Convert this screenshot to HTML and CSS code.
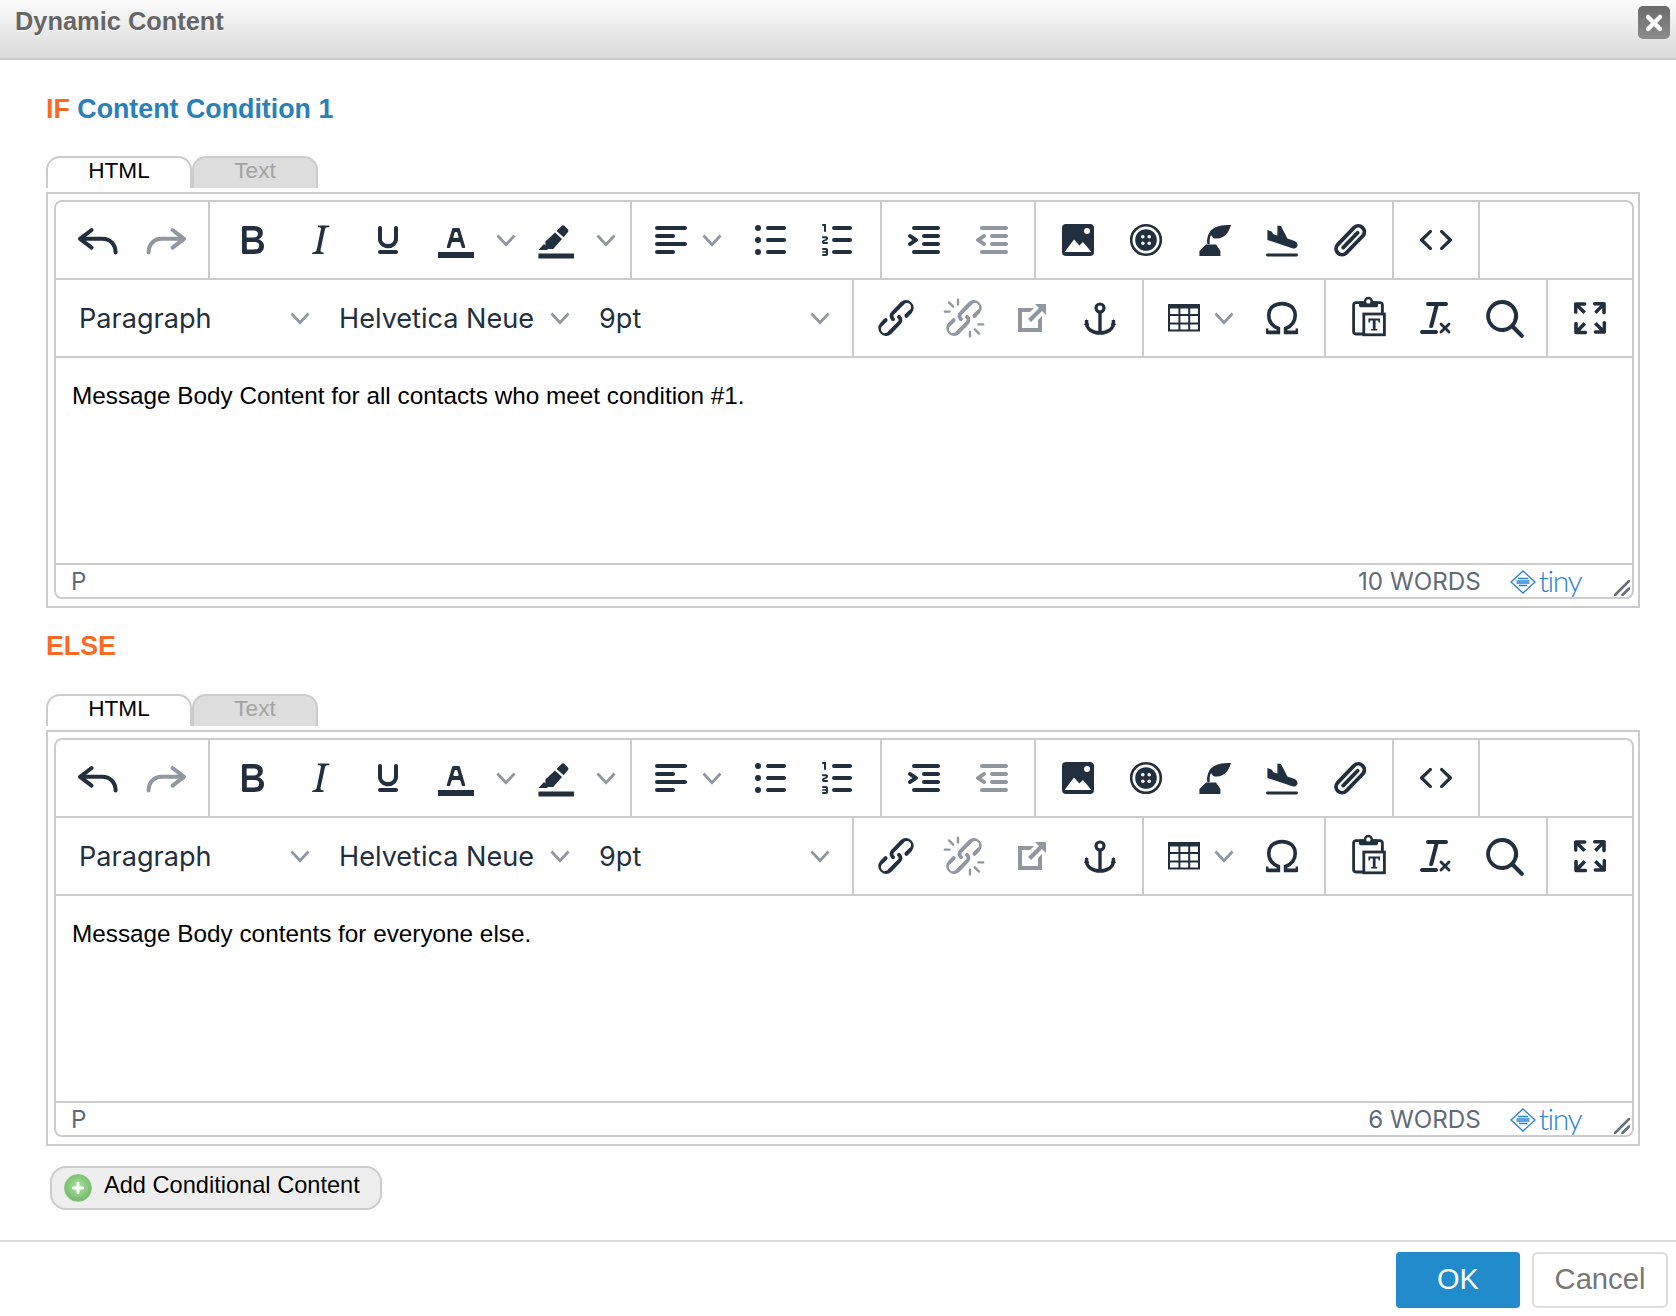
FILE: index.html
```html
<!DOCTYPE html>
<html lang="en">
<head>
<meta charset="utf-8">
<title>Dynamic Content</title>
<link rel="stylesheet" href="styles.css">
</head>
<body>
<svg class="defs" xmlns="http://www.w3.org/2000/svg">
  <symbol id="undo" viewBox="0 0 24 24"><path d="M8.800 7 3 11.400l5.800 4.400M3 11.400h11c4 0 6.800 2.600 6.800 6.900" fill="none" stroke="currentColor" stroke-width="2" stroke-linecap="round" stroke-linejoin="round"/></symbol>
  <symbol id="redo" viewBox="0 0 24 24"><path d="M15.300 7l5.700 4.400-5.700 4.400M21 11.400H10c-4 0-6.700 2.600-6.700 6.900" fill="none" stroke="currentColor" stroke-width="2" stroke-linecap="round" stroke-linejoin="round"/></symbol>
  <symbol id="bold" viewBox="0 0 24 24"><path d="M7.800 19c-.3 0-.5 0-.6-.2l-.2-.5V5.700c0-.2 0-.4.2-.5l.6-.2h5c1.500 0 2.700.3 3.500 1 .7.6 1.100 1.400 1.100 2.500a3 3 0 0 1-.6 1.900c-.4.6-1 1-1.600 1.200.4.1.9.3 1.300.6s.8.7 1 1.200c.4.4.5 1 .5 1.600 0 1.300-.4 2.300-1.300 3-.8.7-2.100 1-3.800 1H7.800zm5-8.300c.6 0 1.200-.1 1.600-.5.4-.3.6-.7.6-1.300 0-1.100-.8-1.700-2.300-1.700H9.300v3.500h3.500zm.5 6c.7 0 1.300-.1 1.700-.4.4-.4.600-.9.600-1.500s-.2-1-.7-1.400c-.4-.3-1-.4-2-.4H9.400v3.700h3.900z" fill="currentColor"/></symbol>
  <symbol id="italic" viewBox="0 0 24 24"><path d="M16.700 4.700l-.1.900h-.3c-.6 0-1 0-1.400.3-.3.3-.4.6-.5 1.100l-2.100 9.800v.6c0 .5.4.8 1.400.8h.2l-.2.8H8l.2-.8h.2c1.100 0 1.800-.5 2-1.500l2-9.800.1-.5c0-.6-.4-.8-1.400-.8h-.3l.2-.9h5.400z" fill="currentColor"/></symbol>
  <symbol id="underline" viewBox="0 0 24 24"><path d="M16 5c.6 0 1 .4 1 1v5.500a4 4 0 0 1-.4 1.800l-1 1.400a5.300 5.300 0 0 1-5.500 1 5 5 0 0 1-1.600-1c-.5-.4-.8-.9-1.100-1.400a4 4 0 0 1-.4-1.800V6c0-.6.4-1 1-1s1 .4 1 1v5.500c0 .3 0 .6.2 1l.6.7a3.300 3.300 0 0 0 2.200.8 3.400 3.400 0 0 0 2.200-.8c.3-.2.4-.5.6-.8l.2-.9V6c0-.6.400-1 1-1zM8 17h8c.6 0 1 .4 1 1s-.4 1-1 1H8a1 1 0 0 1 0-2z" fill="currentColor"/></symbol>
  <symbol id="textcolor" viewBox="0 0 24 24"><path d="M3 18h18v3H3z" fill="currentColor"/><path d="M8.700 16h-.8a.5.5 0 0 1-.5-.6l2.700-9c.1-.3.3-.4.5-.4h2.800c.2 0 .4.100.5.400l2.700 9a.5.5 0 0 1-.5.600h-.8a.5.5 0 0 1-.4-.4l-.7-2.200c0-.3-.3-.4-.5-.4h-3.400c-.2 0-.4.100-.5.400l-.7 2.200c0 .3-.2.400-.4.400zm2.600-7.600l-.6 2a.5.5 0 0 0 .5.600h1.600a.5.5 0 0 0 .5-.6l-.6-2c0-.3-.3-.4-.5-.4h-.4c-.2 0-.4.100-.5.400z" fill="currentColor"/></symbol>
  <symbol id="highlight" viewBox="0 0 24 24"><path d="M3.200 18.700H21v2.600H3.200z" fill="currentColor"/><path d="M15 4.800q.6-.5 1.200.1L18 6.700q.5.700 0 1.300l-2.200 2.600-3.500-3.100zM11.500 8.300 15 11.500l-4.400 5H8.200L6.700 15v-2.300zM6 14l2 2.300-.3.700H3.200z" fill="currentColor"/></symbol>
  <symbol id="alignleft" viewBox="0 0 24 24"><path d="M5 5h14c.6 0 1 .4 1 1s-.4 1-1 1H5a1 1 0 1 1 0-2zm0 4h8c.6 0 1 .4 1 1s-.4 1-1 1H5a1 1 0 1 1 0-2zm0 8h8c.6 0 1 .4 1 1s-.4 1-1 1H5a1 1 0 0 1 0-2zm0-4h14c.6 0 1 .4 1 1s-.4 1-1 1H5a1 1 0 0 1 0-2z" fill="currentColor"/></symbol>
  <symbol id="ul" viewBox="0 0 24 24"><path d="M11 5h8c.6 0 1 .4 1 1s-.4 1-1 1h-8a1 1 0 0 1 0-2zm0 6h8c.6 0 1 .4 1 1s-.4 1-1 1h-8a1 1 0 0 1 0-2zm0 6h8c.6 0 1 .4 1 1s-.4 1-1 1h-8a1 1 0 0 1 0-2z" fill="currentColor"/><circle cx="6" cy="6" r="1.500" fill="currentColor"/><circle cx="6" cy="12" r="1.500" fill="currentColor"/><circle cx="6" cy="18" r="1.500" fill="currentColor"/></symbol>
  <symbol id="ol" viewBox="0 0 24 24"><path d="M10 17h8c.6 0 1 .4 1 1s-.4 1-1 1h-8a1 1 0 0 1 0-2zm0-6h8c.6 0 1 .4 1 1s-.4 1-1 1h-8a1 1 0 0 1 0-2zm0-6h8c.6 0 1 .4 1 1s-.4 1-1 1h-8a1 1 0 1 1 0-2zM6 4v3.500c0 .3-.2.5-.5.5a.5.5 0 0 1-.5-.5V5h-.5a.5.5 0 0 1 0-1H6zm-1 8.800l.2.200h1.300c.3 0 .5.200.5.500s-.2.500-.5.500H4.900a1 1 0 0 1-.9-1V13c0-.4.300-.8.600-1l1.200-.4.200-.3a.2.2 0 0 0-.2-.2H4.500a.5.5 0 0 1-.5-.5c0-.3.200-.5.500-.5h1.600c.5 0 .9.400.9 1v.1c0 .4-.3.8-.6 1l-1.200.4-.2.300zM7 17v2c0 .6-.4 1-1 1H4.500a.5.5 0 0 1 0-1h1.200c.2 0 .3-.1.3-.3 0-.2-.1-.3-.3-.3H4.400a.4.4 0 1 1 0-.8h1.300c.2 0 .3-.1.3-.3 0-.2-.1-.3-.3-.3H4.500a.5.5 0 1 1 0-1H6c.6 0 1 .4 1 1z" fill="currentColor"/></symbol>
  <symbol id="indent" viewBox="0 0 24 24"><path d="M7 5h12c.6 0 1 .4 1 1s-.4 1-1 1H7a1 1 0 1 1 0-2zm5 4h7c.6 0 1 .4 1 1s-.4 1-1 1h-7a1 1 0 0 1 0-2zm0 4h7c.6 0 1 .4 1 1s-.4 1-1 1h-7a1 1 0 0 1 0-2zm-5 4h12a1 1 0 0 1 0 2H7a1 1 0 0 1 0-2zm-2.600-3.800L6.200 12l-1.800-1.200a1 1 0 0 1 1.200-1.600l3 2a1 1 0 0 1 0 1.600l-3 2a1 1 0 1 1-1.200-1.600z" fill="currentColor"/></symbol>
  <symbol id="outdent" viewBox="0 0 24 24"><path d="M7 5h12c.6 0 1 .4 1 1s-.4 1-1 1H7a1 1 0 1 1 0-2zm5 4h7c.6 0 1 .4 1 1s-.4 1-1 1h-7a1 1 0 0 1 0-2zm0 4h7c.6 0 1 .4 1 1s-.4 1-1 1h-7a1 1 0 0 1 0-2zm-5 4h12a1 1 0 0 1 0 2H7a1 1 0 0 1 0-2zm1.600-3.800a1 1 0 0 1-1.200 1.600l-3-2a1 1 0 0 1 0-1.600l3-2a1 1 0 0 1 1.200 1.600L6.800 12l1.800 1.200z" fill="currentColor"/></symbol>
  <symbol id="image" viewBox="0 0 24 24"><rect x="4" y="4" width="16" height="16" rx="2" fill="currentColor"/><path d="M5.300 18 10 11.800l2.700 3 1.800-1.800 4.200 5z" fill="#fff"/><circle cx="16.500" cy="7.500" r="1.500" fill="#fff"/></symbol>
  <symbol id="button" viewBox="0 0 24 24"><circle cx="12" cy="12" r="7.400" fill="none" stroke="currentColor" stroke-width="1.300"/><circle cx="12" cy="12" r="5.400" fill="currentColor"/><circle cx="10.400" cy="10.400" r=".9" fill="#fff"/><circle cx="13.600" cy="10.400" r=".9" fill="#fff"/><circle cx="10.400" cy="13.600" r=".9" fill="#fff"/><circle cx="13.600" cy="13.600" r=".9" fill="#fff"/></symbol>
  <symbol id="ink" viewBox="0 0 24 24"><path d="M20.500 4.500c-4.500 0-8.500.5-10 3.100-.5 1.400.5 3.900 3 3.700 4-.3 6-3.300 7-6.800z" fill="currentColor"/><path d="M9.200 13.500c-.2-2.300.4-4.300 1.800-6" fill="none" stroke="currentColor" stroke-width="1.300" stroke-linecap="round"/><path d="M8 14.200h5l2.200 3.300V20H4.700v-2.500z" fill="currentColor"/></symbol>
  <symbol id="plane" viewBox="0 0 24 24"><path d="M4.700 7l2.100.7 1 1.600 1.900.5V4.700l1.800.3 3.200 6.300 3.300 1.100q2 .8 1.700 2.600-.7 1.600-2.200 1.200L4.700 12z" fill="currentColor"/><rect x="4" y="18.800" width="16" height="1.400" rx=".7" fill="currentColor"/></symbol>
  <symbol id="clip" viewBox="0 0 24 24"><path d="M14.140 5.730A3 3 0 0 1 18.460 9.870L10.060 18.570A3 3 0 0 1 5.740 14.430zM15.800 8.400 8.600 15.800" fill="none" stroke="currentColor" stroke-width="1.900" stroke-linecap="round"/></symbol>
  <symbol id="code" viewBox="0 0 24 24"><path d="M9.800 15.700c.3.3.3.8 0 1-.3.4-.9.4-1.200 0l-4.400-4.100a.8.8 0 0 1 0-1.200l4.400-4.200c.3-.3.9-.3 1.200 0 .3.300.3.800 0 1.100L6 12l3.800 3.700zM14.200 15.700c-.3.300-.3.800 0 1 .4.400.9.400 1.200 0l4.400-4.100c.3-.3.3-.9 0-1.200l-4.400-4.200a.8.8 0 0 0-1.200 0c-.3.300-.3.800 0 1.100L18 12l-3.800 3.700z" fill="currentColor"/></symbol>
  <symbol id="link" viewBox="0 0 24 24"><path d="M6.200 12.300a1 1 0 0 1 1.400 1.400l-2.100 2.100a2 2 0 1 0 2.700 2.700l4.800-4.800a1 1 0 0 0 0-1.400 1 1 0 1 1 1.400-1.300 2.900 2.900 0 0 1 0 4L9.600 20a3.900 3.900 0 0 1-5.500-5.500l2.100-2.200zm11.600-.6a1 1 0 0 1-1.400-1.400l2-2a2 2 0 1 0-2.600-2.800L11 10.300a1 1 0 0 0 0 1.400A1 1 0 1 1 9.600 13a2.900 2.900 0 0 1 0-4L14.400 4a3.900 3.900 0 0 1 5.500 5.500l-2.100 2.200z" fill="currentColor"/></symbol>
  <symbol id="unlink" viewBox="0 0 24 24"><path d="M6.200 12.300a1 1 0 0 1 1.400 1.400l-2.100 2.100a2 2 0 1 0 2.700 2.700l4.800-4.800a1 1 0 0 0 0-1.400 1 1 0 1 1 1.400-1.300 2.900 2.900 0 0 1 0 4L9.600 20a3.900 3.900 0 0 1-5.500-5.500l2.100-2.200zm11.600-.6a1 1 0 0 1-1.400-1.400l2-2a2 2 0 1 0-2.600-2.800L11 10.300a1 1 0 0 0 0 1.400A1 1 0 1 1 9.600 13a2.900 2.900 0 0 1 0-4L14.400 4a3.900 3.900 0 0 1 5.500 5.500l-2.100 2.200z" fill="currentColor"/><path d="M4.500 4.200 6.600 6.300M9 2.800v2.400M2.400 8.800h2.400M19.500 19.800l-2.100-2.100M15 21.200v-2.400M21.600 15.200h-2.400" stroke="currentColor" stroke-width="1.200" stroke-linecap="round"/></symbol>
  <symbol id="newtab" viewBox="0 0 24 24"><path d="M15 13l2-2v8H5V7h8l-2 2H7v8h8v-4zm4-8v5.500l-2-2-5.500 5.500-1.500-1.500 5.500-5.500-2-2H19z" fill="currentColor"/></symbol>
  <symbol id="anchor" viewBox="0 0 24 24"><circle cx="12" cy="7" r="2" fill="none" stroke="currentColor" stroke-width="1.600"/><path d="M12 9v10.500M5.300 13v1.500c0 3 3 5 6.700 5s6.700-2 6.700-5V13" fill="none" stroke="currentColor" stroke-width="1.700"/><path d="M4 15.500l1.300-3 1.300 3zM17.400 15.500l1.300-3 1.300 3z" fill="currentColor"/></symbol>
  <symbol id="table" viewBox="0 0 24 24"><path d="M4.500 5h16v13.800h-16zM5.500 7.200v10.600h14V7.200z" fill="currentColor" fill-rule="evenodd"/><path d="M10.200 7v11M15.100 7v11M5 10.500h15M5 14.700h15" stroke="currentColor" stroke-width="1"/></symbol>
  <symbol id="omega" viewBox="0 0 24 24"><path d="M4.600 19.200h5.600v-2C7.200 16 5.400 13.500 5.400 10.700 5.400 7 8.200 4.800 12 4.800s6.600 2.200 6.600 5.900c0 2.800-1.800 5.300-4.800 6.500v2h5.600" fill="none" stroke="currentColor" stroke-width="1.800"/><path d="M4 17.300h1.200V20H4zM18.800 17.300H20V20h-1.200z" fill="currentColor"/></symbol>
  <symbol id="pastetext" viewBox="0 0 24 24"><path d="M9.500 20H6a1.200 1.200 0 0 1-1.200-1.200V5.500A1.200 1.200 0 0 1 6 4.300h12a1.200 1.200 0 0 1 1.200 1.200V10" fill="none" stroke="currentColor" stroke-width="1.400"/><rect x="7.500" y="3.600" width="9.500" height="3" rx=".8" fill="currentColor"/><circle cx="12.200" cy="3.700" r="1.700" fill="#fff" stroke="currentColor" stroke-width="1.200"/><rect x="9.900" y="10" width="10.300" height="10.400" fill="#fff" stroke="currentColor" stroke-width="1.400"/><path d="M12.200 12.200H18v2h-.7l-.2-.9h-1.300v4.200h.8v.8h-3v-.8h.8v-4.200h-1.300l-.2.900h-.7z" fill="currentColor"/></symbol>
  <symbol id="removeformat" viewBox="0 0 24 24"><path d="M13.200 6a1 1 0 0 1 0 .2l-2.600 10a1 1 0 0 1-1 .8h-.2a.8.8 0 0 1-.8-1l2.600-10H8a1 1 0 1 1 0-2h9a1 1 0 0 1 0 2h-3.800zM5 18h7a1 1 0 0 1 0 2H5a1 1 0 0 1 0-2zm13 1.500L16.500 18 15 19.500a.7.7 0 0 1-1-1l1.500-1.500-1.500-1.500a.7.7 0 0 1 1-1l1.500 1.500 1.500-1.500a.7.7 0 0 1 1 1L17.500 17l1.500 1.500a.7.7 0 0 1-1 1z" fill="currentColor"/></symbol>
  <symbol id="search" viewBox="0 0 24 24"><path d="M16 17.300a8 8 0 1 1 1.400-1.400l4.300 4.400a1 1 0 0 1-1.400 1.400l-4.400-4.300zm-5-.3a6 6 0 1 0 0-12 6 6 0 0 0 0 12z" fill="currentColor"/></symbol>
  <symbol id="fullscreen" viewBox="0 0 24 24"><path d="M15.300 10l-1.200-1.300 2.900-3h-2.300a.9.900 0 1 1 0-1.700H19c.5 0 .9.400.9.900v4.400a.9.900 0 1 1-1.800 0V7l-2.800 3zm0 4l3 3v-2.300a.9.900 0 1 1 1.700 0V19c0 .5-.4.900-.9.900h-4.400a.9.900 0 1 1 0-1.800H17l-3-2.900 1.300-1.200zM10 15.400l-2.900 3h2.300a.9.900 0 1 1 0 1.700H5a.9.900 0 0 1-.9-.9v-4.400a.9.900 0 1 1 1.800 0V17l2.900-3 1.200 1.400zM8.700 10L5.700 7v2.300a.9.900 0 0 1-1.700 0V5c0-.5.400-.9.900-.9h4.400a.9.900 0 0 1 0 1.800H7l3 2.900-1.300 1.200z" fill="currentColor"/></symbol>
  <symbol id="chev" viewBox="0 0 20 13"><path d="M1.500 1.500 10 10.700l8.500-9.200" fill="none" stroke="currentColor" stroke-width="2.800"/></symbol>
  <symbol id="tinylogo" viewBox="0 0 26 24"><path d="M13 1 25 12 13 23 1 12z" fill="none" stroke="currentColor" stroke-width="1.300"/><path d="M8 8.500h10M6.500 11h13M6.500 13h13M9 15.500h8" stroke="currentColor" stroke-width="1.300"/></symbol>
  <symbol id="grip" viewBox="0 0 16 16"><path d="M1 15 15 1M8.500 15 15 8.500" stroke="currentColor" stroke-width="2.500" stroke-linecap="round"/></symbol>
</svg>

<header class="dialog-head">
  <h1 class="dialog-title">Dynamic Content</h1>
  <button class="close-btn" aria-label="Close"><svg viewBox="0 0 32 32" class="close-x"><path d="M10 10 22 22M22 10 10 22" stroke="#fff" stroke-width="4.500" stroke-linecap="round"/></svg></button>
</header>

<main class="dialog-body">
  <section class="cond">
    <h2 class="cond-title"><span class="kw">IF</span> <span class="cond-name">Content Condition 1</span></h2>
    <div class="tabs"><span class="tab tab-on">HTML</span><span class="tab tab-off">Text</span></div>
    <div class="editor-wrap">
      <div class="editor">
        <div class="tb">
          <div class="grp"><span class="b"><svg class="i"><use href="#undo"/></svg></span><span class="b off"><svg class="i"><use href="#redo"/></svg></span></div>
          <div class="grp"><span class="b"><svg class="i"><use href="#bold"/></svg></span><span class="b"><svg class="i"><use href="#italic"/></svg></span><span class="b"><svg class="i"><use href="#underline"/></svg></span><span class="b"><svg class="i"><use href="#textcolor"/></svg></span><span class="b-chev"><svg class="chev"><use href="#chev"/></svg></span><span class="b"><svg class="i"><use href="#highlight"/></svg></span><span class="b-chev"><svg class="chev"><use href="#chev"/></svg></span></div>
          <div class="grp"><span class="b-menu"><svg class="i"><use href="#alignleft"/></svg><svg class="chev"><use href="#chev"/></svg></span><span class="b"><svg class="i"><use href="#ul"/></svg></span><span class="b"><svg class="i"><use href="#ol"/></svg></span></div>
          <div class="grp"><span class="b"><svg class="i"><use href="#indent"/></svg></span><span class="b off"><svg class="i"><use href="#outdent"/></svg></span></div>
          <div class="grp"><span class="b"><svg class="i"><use href="#image"/></svg></span><span class="b"><svg class="i"><use href="#button"/></svg></span><span class="b"><svg class="i"><use href="#ink"/></svg></span><span class="b"><svg class="i"><use href="#plane"/></svg></span><span class="b"><svg class="i"><use href="#clip"/></svg></span></div>
          <div class="grp"><span class="b"><svg class="i"><use href="#code"/></svg></span></div>
        </div>
        <div class="tb">
          <div class="grp"><span class="sel sel-a">Paragraph<svg class="chev"><use href="#chev"/></svg></span><span class="sel sel-b">Helvetica Neue<svg class="chev"><use href="#chev"/></svg></span><span class="sel sel-c">9pt<svg class="chev"><use href="#chev"/></svg></span></div>
          <div class="grp"><span class="b"><svg class="i"><use href="#link"/></svg></span><span class="b off"><svg class="i"><use href="#unlink"/></svg></span><span class="b off"><svg class="i"><use href="#newtab"/></svg></span><span class="b"><svg class="i"><use href="#anchor"/></svg></span></div>
          <div class="grp"><span class="b-menu"><svg class="i"><use href="#table"/></svg><svg class="chev"><use href="#chev"/></svg></span><span class="b"><svg class="i"><use href="#omega"/></svg></span></div>
          <div class="grp"><span class="b"><svg class="i"><use href="#pastetext"/></svg></span><span class="b"><svg class="i"><use href="#removeformat"/></svg></span><span class="b"><svg class="i"><use href="#search"/></svg></span></div>
          <div class="grp grp-last"><span class="b"><svg class="i"><use href="#fullscreen"/></svg></span></div>
        </div>
        <div class="content"><p>Message Body Content for all contacts who meet condition #1.</p></div>
        <div class="status"><span class="path">P</span><span class="words">10 WORDS</span><span class="tiny"><svg class="tiny-mark"><use href="#tinylogo"/></svg>tiny</span><svg class="grip"><use href="#grip"/></svg></div>
      </div>
    </div>
  </section>

  <section class="cond">
    <h2 class="cond-title"><span class="kw">ELSE</span></h2>
    <div class="tabs"><span class="tab tab-on">HTML</span><span class="tab tab-off">Text</span></div>
    <div class="editor-wrap">
      <div class="editor">
        <div class="tb">
          <div class="grp"><span class="b"><svg class="i"><use href="#undo"/></svg></span><span class="b off"><svg class="i"><use href="#redo"/></svg></span></div>
          <div class="grp"><span class="b"><svg class="i"><use href="#bold"/></svg></span><span class="b"><svg class="i"><use href="#italic"/></svg></span><span class="b"><svg class="i"><use href="#underline"/></svg></span><span class="b"><svg class="i"><use href="#textcolor"/></svg></span><span class="b-chev"><svg class="chev"><use href="#chev"/></svg></span><span class="b"><svg class="i"><use href="#highlight"/></svg></span><span class="b-chev"><svg class="chev"><use href="#chev"/></svg></span></div>
          <div class="grp"><span class="b-menu"><svg class="i"><use href="#alignleft"/></svg><svg class="chev"><use href="#chev"/></svg></span><span class="b"><svg class="i"><use href="#ul"/></svg></span><span class="b"><svg class="i"><use href="#ol"/></svg></span></div>
          <div class="grp"><span class="b"><svg class="i"><use href="#indent"/></svg></span><span class="b off"><svg class="i"><use href="#outdent"/></svg></span></div>
          <div class="grp"><span class="b"><svg class="i"><use href="#image"/></svg></span><span class="b"><svg class="i"><use href="#button"/></svg></span><span class="b"><svg class="i"><use href="#ink"/></svg></span><span class="b"><svg class="i"><use href="#plane"/></svg></span><span class="b"><svg class="i"><use href="#clip"/></svg></span></div>
          <div class="grp"><span class="b"><svg class="i"><use href="#code"/></svg></span></div>
        </div>
        <div class="tb">
          <div class="grp"><span class="sel sel-a">Paragraph<svg class="chev"><use href="#chev"/></svg></span><span class="sel sel-b">Helvetica Neue<svg class="chev"><use href="#chev"/></svg></span><span class="sel sel-c">9pt<svg class="chev"><use href="#chev"/></svg></span></div>
          <div class="grp"><span class="b"><svg class="i"><use href="#link"/></svg></span><span class="b off"><svg class="i"><use href="#unlink"/></svg></span><span class="b off"><svg class="i"><use href="#newtab"/></svg></span><span class="b"><svg class="i"><use href="#anchor"/></svg></span></div>
          <div class="grp"><span class="b-menu"><svg class="i"><use href="#table"/></svg><svg class="chev"><use href="#chev"/></svg></span><span class="b"><svg class="i"><use href="#omega"/></svg></span></div>
          <div class="grp"><span class="b"><svg class="i"><use href="#pastetext"/></svg></span><span class="b"><svg class="i"><use href="#removeformat"/></svg></span><span class="b"><svg class="i"><use href="#search"/></svg></span></div>
          <div class="grp grp-last"><span class="b"><svg class="i"><use href="#fullscreen"/></svg></span></div>
        </div>
        <div class="content"><p>Message Body contents for everyone else.</p></div>
        <div class="status"><span class="path">P</span><span class="words">6 WORDS</span><span class="tiny"><svg class="tiny-mark"><use href="#tinylogo"/></svg>tiny</span><svg class="grip"><use href="#grip"/></svg></div>
      </div>
    </div>
  </section>

  <button class="add-btn"><span class="add-ico"><svg viewBox="0 0 12 12" class="add-plus"><path d="M6 2.500v7M2.500 6h7" stroke="#fff" stroke-width="2.200" stroke-linecap="round"/></svg></span>Add Conditional Content</button>
</main>

<footer class="dialog-foot">
  <button class="ok-btn">OK</button>
  <button class="cancel-btn">Cancel</button>
</footer>
</body>
</html>
```

FILE: styles.css
```css
* { box-sizing: border-box; }
html, body { margin: 0; padding: 0; background: #fff; }
body { position: relative; width: 1676px; height: 1316px; overflow: hidden; font-family: "Liberation Sans", Arial, sans-serif; }
.defs { display: none; }

.dialog-head {
  height: 60px;
  display: flex;
  justify-content: space-between;
  align-items: flex-start;
  padding: 6px 6px 0 15px;
  background: linear-gradient(#fbfbfb, #dadada);
  border-bottom: 2px solid #ccc;
}
.dialog-title { margin: 0; font-size: 25.4px; line-height: 30px; font-weight: 700; color: #666; text-shadow: 0 1px 0 #fff; }
.close-btn { width: 32px; height: 33px; padding: 0; border: 0; border-radius: 5px; background: linear-gradient(#6a6a6a, #8c8c8c); display: flex; align-items: center; justify-content: center; }
.close-x { width: 32px; height: 32px; }

.dialog-body { padding: 33px 36px 0 46px; }
.cond { margin-bottom: 23px; }
.cond:nth-of-type(2) { margin-bottom: 20px; }
.cond-title { margin: 0 0 33px; height: 30px; padding-top: 1px; font-size: 26.8px; line-height: 30px; font-weight: 700; }
.cond:nth-of-type(2) .cond-title { padding-top: 0; }
.kw { color: #fb6a25; }
.cond-name { color: #2a80b9; }

.tabs { display: flex; height: 32px; margin-bottom: 4px; }
.tab { height: 32px; font-size: 22.6px; line-height: 26px; text-align: center; border: 2px solid #ccc; border-bottom: 0; border-radius: 14px 14px 0 0; }
.tab-on { width: 146px; background: #fff; color: #000; }
.tab-off { width: 126px; background: #ddd; color: #a3a3a3; }

.editor-wrap { border: 2px solid #ccc; padding: 6px 4px 7px 6px; height: 416px; }
.editor { border: 2px solid #ccc; border-radius: 8px; height: 399px; display: flex; flex-direction: column; color: #222f3e; font-family: Inter, "Liberation Sans", sans-serif; }

.tb { display: flex; height: 78px; border-bottom: 2px solid #ccc; flex: none; }
.grp { display: flex; align-items: center; padding: 0 8px; border-right: 2px solid #ccc; }
.grp-last { border-right: 0; }
.b { width: 68px; height: 76px; display: flex; align-items: center; justify-content: center; color: #222f3e; flex: none; }
.off { color: #9097a0; }
.i { width: 48px; height: 48px; flex: none; }
.b-chev { width: 32px; height: 76px; display: flex; align-items: center; justify-content: center; }
.chev { width: 20px; height: 13px; color: #9097a0; flex: none; }
.b-menu { width: 92px; margin-right: 4px; height: 76px; display: flex; align-items: center; padding-left: 7px; gap: 7px; color: #222f3e; }
.sel { display: flex; align-items: center; justify-content: space-between; height: 76px; font-size: 27.1px; color: #222f3e; flex: none; }
.sel-a { width: 259px; padding: 0 13px 0 15px; }
.sel-b { width: 260px; padding: 0 13px 0 16px; }
.sel-c { width: 261px; padding: 0 14px 0 16px; }

.content { flex: 1; padding: 21px 16px; font-family: "Liberation Sans", Arial, sans-serif; font-size: 24.3px; line-height: 34px; color: #000; }
.content p { margin: 0; }

.status { height: 34px; flex: none; border-top: 2px solid #ccc; display: flex; align-items: center; padding: 1px 0 0 15px; font-size: 24.2px; color: #5f6b79; }
.path { color: #5f6b79; }
.words { margin-left: auto; }
.tiny { margin-left: 29px; display: flex; align-items: center; font-family: Lato, sans-serif; font-weight: 300; font-size: 30px; letter-spacing: -1.5px; color: #2a81d8; line-height: 26px; padding-bottom: 4px; }
.tiny-mark { width: 26px; height: 24px; margin: 4px 3px 0 0; }
.grip { width: 16px; height: 16px; margin: 12px 2px 0 33px; color: #666e78; }

.add-btn { display: flex; align-items: center; width: 332px; height: 44px; margin-left: 4px; padding: 0 0 6px 12px; background: #eee; border: 2px solid #ccc; border-radius: 16px; font-family: "Liberation Sans", Arial, sans-serif; font-size: 23.6px; color: #000; text-shadow: 0 1px 0 #fff; }
.add-ico { width: 28px; height: 28px; margin: 6px 12px 0 0; border-radius: 50%; background: radial-gradient(circle at 50% 45%, #b3dfa8 0, #82c678 55%, #5aa650 100%); border: 1px solid #8cc683; display: flex; align-items: center; justify-content: center; }
.add-plus { width: 16px; height: 16px; }

.dialog-foot { position: absolute; left: 0; right: 0; top: 1240px; height: 76px; border-top: 2px solid #ddd; padding: 10px 8px 0 0; display: flex; justify-content: flex-end; gap: 12px; align-items: flex-start; }
.ok-btn { width: 124px; height: 56px; padding: 0 0 2px; background: #218bcc; color: #fff; border: 0; border-radius: 4px; font-family: "Liberation Sans", Arial, sans-serif; font-size: 29px; }
.cancel-btn { width: 136px; height: 56px; padding: 0 0 2px; background: #fff; color: #777; border: 2px solid #ddd; border-radius: 6px; font-family: "Liberation Sans", Arial, sans-serif; font-size: 29.2px; }
```
